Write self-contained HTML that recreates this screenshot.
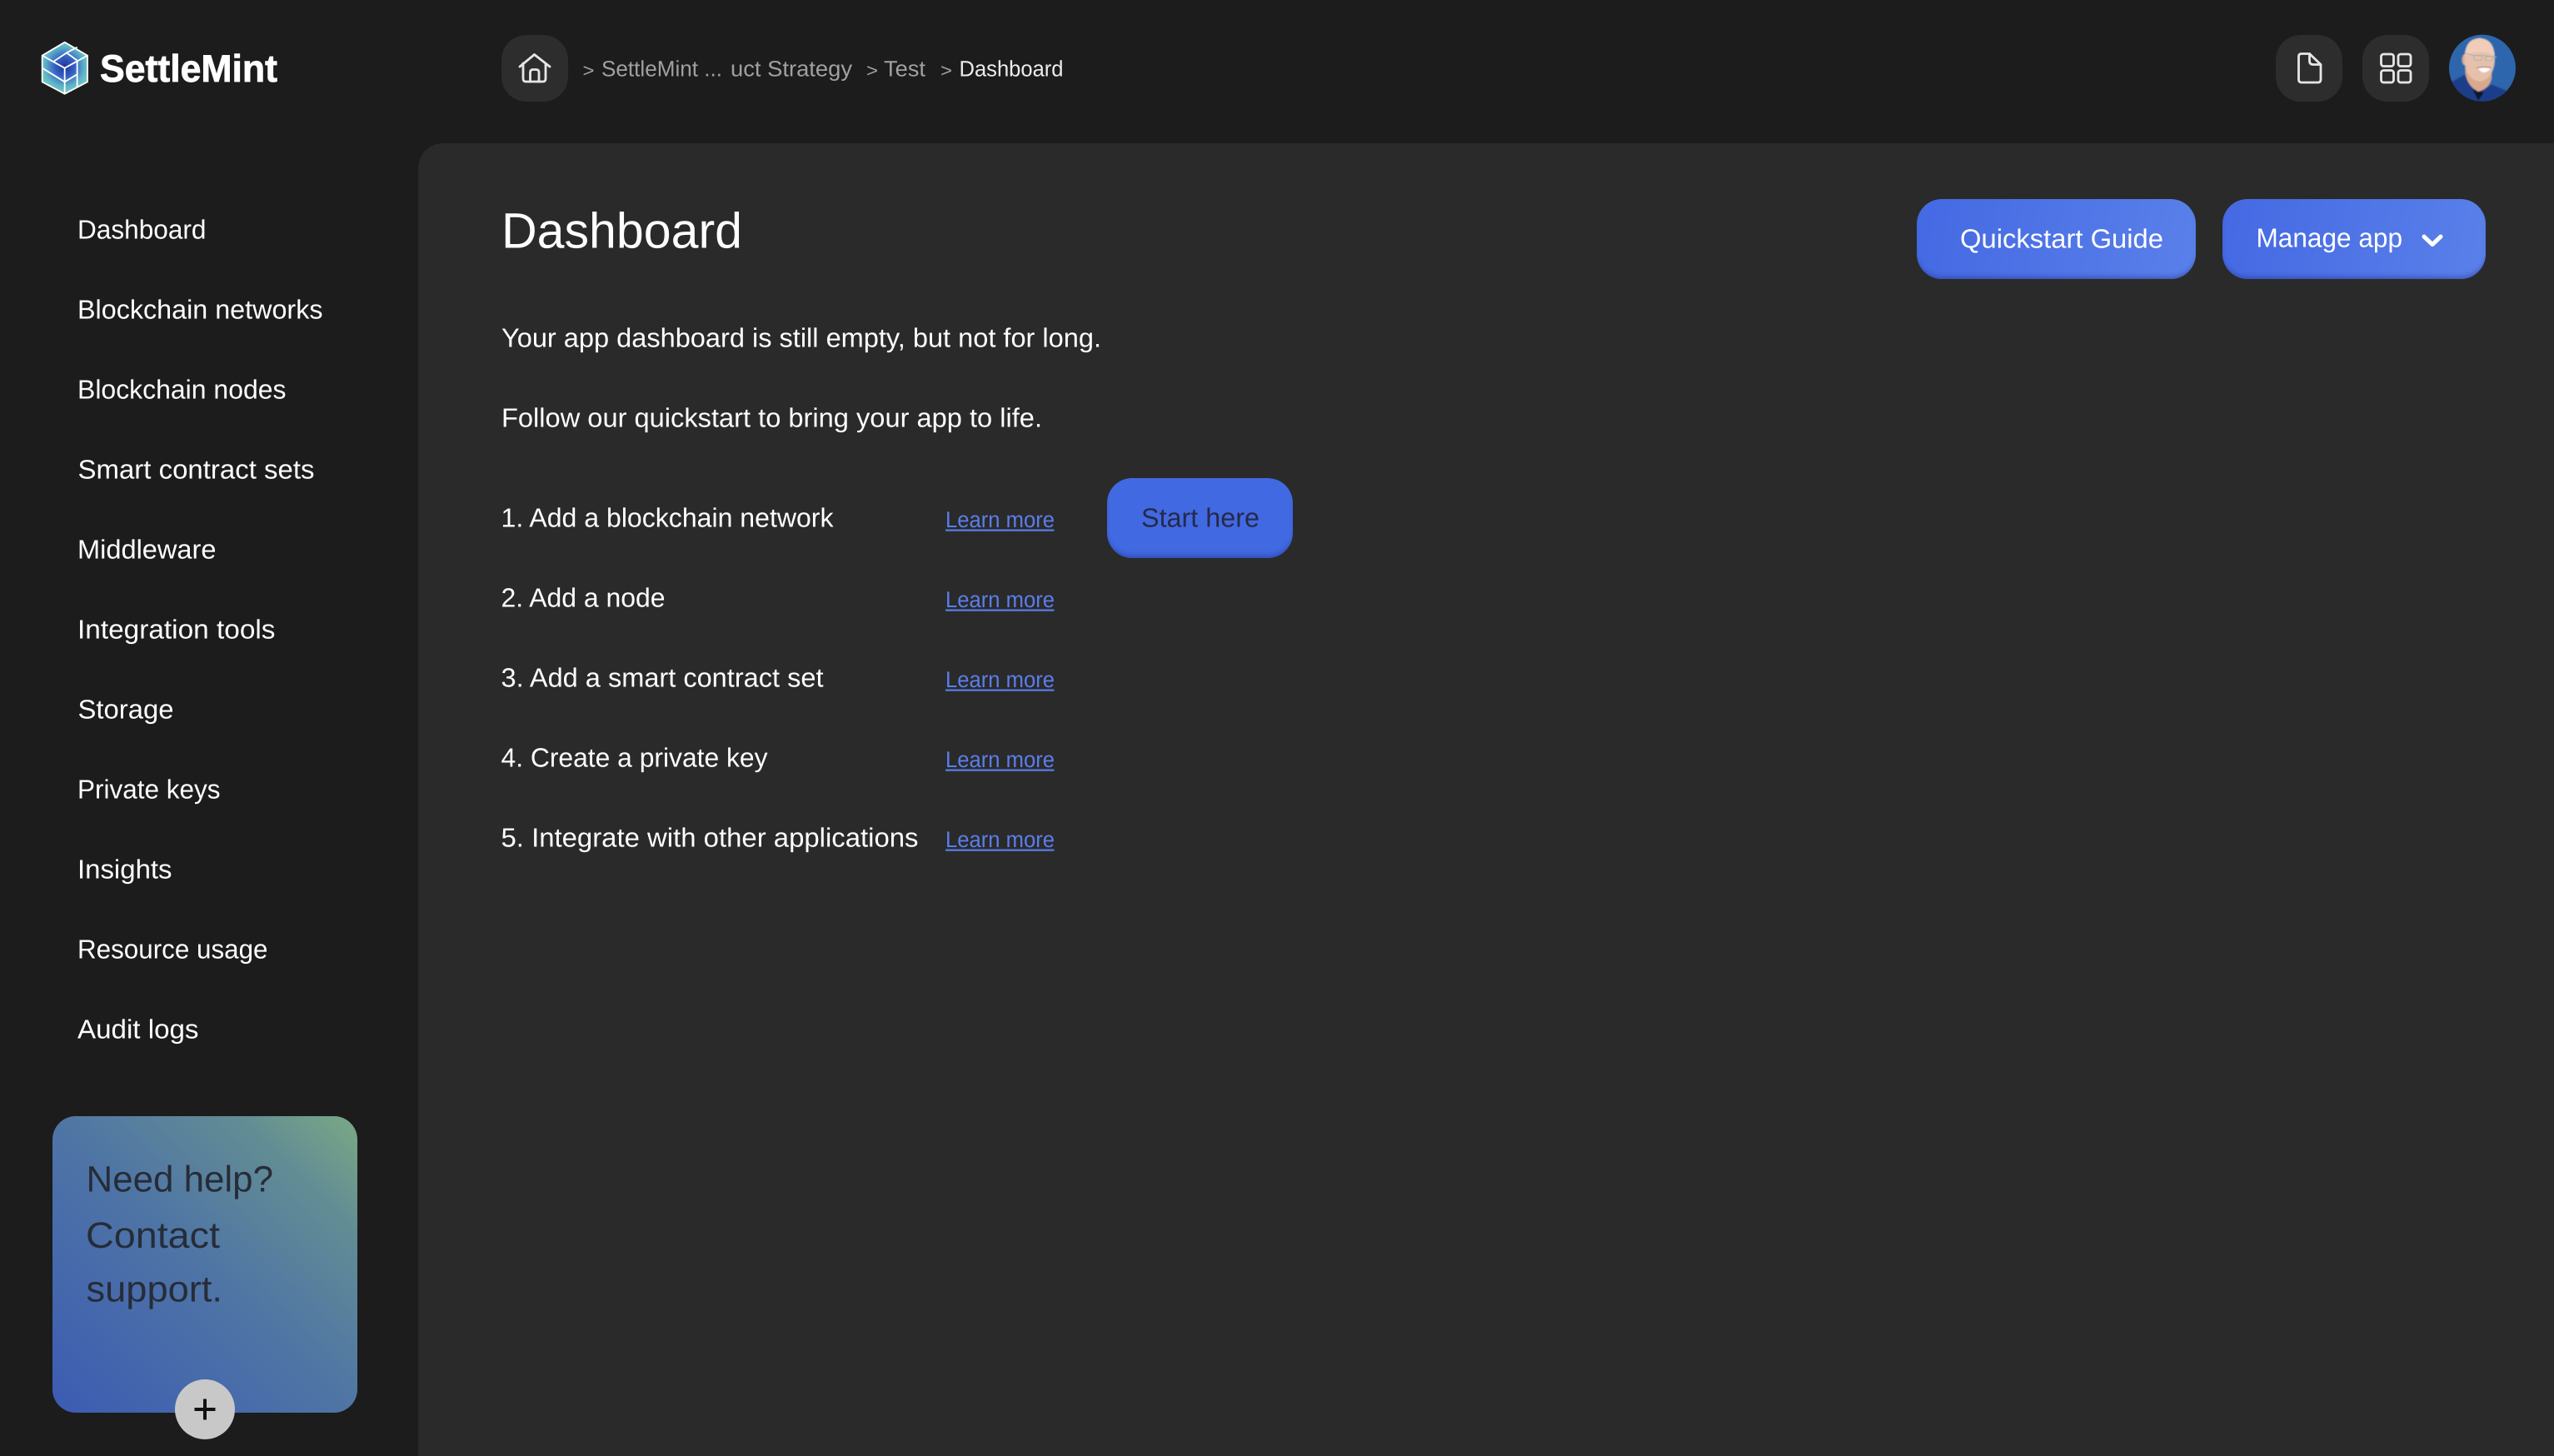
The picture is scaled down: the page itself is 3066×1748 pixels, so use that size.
<!DOCTYPE html>
<html lang="en"><head><meta charset="utf-8"><title>Dashboard</title>
<style>
html,body{margin:0;padding:0;background:#1c1c1c;width:3066px;height:1748px;overflow:hidden}
.a{position:absolute;box-sizing:border-box}
.p{left:502px;top:172px;width:2564px;height:1576px;background:#2a2a2a;border-top-left-radius:30px}
.i{width:80px;height:80px;top:42px;background:#2d2d2d;border-radius:30px}
.b{border-radius:30px;box-shadow:inset 0 -6px 6px -3px rgba(25,40,120,.4)}
svg{position:absolute;left:0;top:0}
text{font-family:"Liberation Sans",sans-serif;text-rendering:geometricPrecision}
.n{font-size:32px;fill:#fff}
.l{font-size:27px;fill:#5b7eea}
.c{font-size:26.5px;fill:#a0a0a0}
.h{font-size:44px;fill:#262c38}
</style></head><body>
<div class="a p"></div>
<div class="a i" style="left:602px"></div>
<div class="a i" style="left:2732px"></div>
<div class="a i" style="left:2836px"></div>
<div class="a b" style="left:2301px;top:239px;width:335px;height:96px;background:linear-gradient(100deg,#4469e3,#5a80ea)"></div>
<div class="a b" style="left:2668px;top:239px;width:316px;height:96px;background:linear-gradient(100deg,#4469e3,#5a80ea)"></div>
<div class="a b" style="left:1329px;top:574px;width:223px;height:96px;background:#4169e1"></div>
<svg width="3066" height="1748" viewBox="0 0 3066 1748" xmlns="http://www.w3.org/2000/svg">
<defs>
<radialGradient id="cube" gradientUnits="userSpaceOnUse" cx="143" cy="150" r="90"><stop offset="0" stop-color="#1f3596"/><stop offset=".4" stop-color="#3560c4"/><stop offset=".8" stop-color="#5fb4c8"/><stop offset="1" stop-color="#72c8c2"/></radialGradient>
<linearGradient id="card" x1="0" y1="1" x2="1" y2="0"><stop offset="0" stop-color="#3c5bb3"/><stop offset=".5" stop-color="#4f75a5"/><stop offset=".8" stop-color="#628c94"/><stop offset="1" stop-color="#7aa985"/></linearGradient>
<clipPath id="av"><circle cx="180" cy="155" r="120"/></clipPath>
<filter id="bl"><feGaussianBlur stdDeviation="2"/></filter>
</defs>

<g transform="translate(30 30) scale(.3333)" stroke="#fff" stroke-width="5.5" fill="none" stroke-linejoin="round">
<path d="M143 62L225 110V205L143 248L62 205V110Z" fill="url(#cube)"/>
<path d="M62 110L143 155V248M143 155L225 110M105 130L150 100L188 128M150 100L188 80M188 128V222M62 155L143 205L188 178"/>
</g>
<text x="120" y="98" font-size="46" font-weight="700" fill="#fff" stroke="#fff" stroke-width=".8" textLength="213" lengthAdjust="spacingAndGlyphs">SettleMint</text>

<!-- home -->
<g fill="none" stroke="#e6e6e6" stroke-width="2.8" stroke-linecap="round" stroke-linejoin="round">
<path d="M624 80L641.5 65.5L660 80"/>
<path d="M628 76V94.5Q628 98 631.5 98H651.5Q655 98 655 94.5V76"/>
<path d="M636.5 98V87Q636.5 83.5 640 83.5H643.5Q647 83.5 647 87V98"/>
<!-- file -->
<path d="M2772.5 64.5H2763Q2759.5 64.5 2759.5 68V95.5Q2759.5 99 2763 99H2782.5Q2786 99 2786 95.5V77.5L2772.5 64.5V73Q2772.5 77.5 2777 77.5H2786"/>
<!-- grid -->
<rect x="2858.5" y="65" width="15" height="14.5" rx="3"/><rect x="2879" y="65" width="15" height="14.5" rx="3"/>
<rect x="2858.5" y="84.5" width="15" height="14.5" rx="3"/><rect x="2879" y="84.5" width="15" height="14.5" rx="3"/>
</g>

<!-- avatar -->
<g transform="translate(2920 30) scale(.3333)" clip-path="url(#av)">
<rect x="50" y="25" width="260" height="260" fill="#2e66ad"/>
<g filter="url(#bl)">
<path d="M60 290V210L118 178L160 240L215 215L275 240V290Z" fill="#1c3c8a"/>
<path d="M145 232L165 272L185 245L165 232Z" fill="#10162e"/>
<path d="M118 170Q125 220 165 240Q208 228 214 190V150H118Z" fill="#d8a88f"/>
<ellipse cx="116" cy="125" rx="10" ry="20" fill="#d8a88f"/>
<ellipse cx="170" cy="125" rx="55" ry="78" fill="#e6c0aa"/>
<path d="M116 110Q120 48 170 48Q220 48 225 110Q170 85 116 110Z" fill="#efcdb9"/>
<path d="M163 156Q188 150 210 156Q198 174 178 170Z" fill="#fff"/>
<path d="M160 155Q188 148 212 155" stroke="#8a5a4a" stroke-width="3" fill="none"/>
</g>
<g fill="none" stroke="#a8b0b8" stroke-width="2.5"><path d="M120 102L150 110H180L215 113L232 116"/><rect x="148" y="110" width="32" height="17" rx="8"/><rect x="190" y="113" width="28" height="16" rx="8"/></g>
</g>

<!-- breadcrumbs -->
<text class="c" x="699.5" y="92" style="font-size:22px" textLength="14" lengthAdjust="spacingAndGlyphs">&gt;</text>
<text class="c" x="722" y="91.5" textLength="145" lengthAdjust="spacingAndGlyphs">SettleMint ...</text>
<text class="c" x="877" y="91.5" textLength="146" lengthAdjust="spacingAndGlyphs">uct Strategy</text>
<text class="c" x="1040" y="92" style="font-size:22px" textLength="14" lengthAdjust="spacingAndGlyphs">&gt;</text>
<text class="c" x="1061" y="91.5" textLength="50" lengthAdjust="spacingAndGlyphs">Test</text>
<text class="c" x="1129" y="92" style="font-size:22px" textLength="14" lengthAdjust="spacingAndGlyphs">&gt;</text>
<text class="c" x="1151.5" y="91.5" style="fill:#ececec" textLength="125" lengthAdjust="spacingAndGlyphs">Dashboard</text>

<!-- nav -->
<text class="n" x="93" y="286.7" textLength="154.5" lengthAdjust="spacingAndGlyphs">Dashboard</text>
<text class="n" x="93" y="382.7" textLength="294.5" lengthAdjust="spacingAndGlyphs">Blockchain networks</text>
<text class="n" x="93" y="478.7" textLength="250.5" lengthAdjust="spacingAndGlyphs">Blockchain nodes</text>
<text class="n" x="93.5" y="574.7" textLength="284" lengthAdjust="spacingAndGlyphs">Smart contract sets</text>
<text class="n" x="93" y="670.7" textLength="166.5" lengthAdjust="spacingAndGlyphs">Middleware</text>
<text class="n" x="93" y="766.7" textLength="237.5" lengthAdjust="spacingAndGlyphs">Integration tools</text>
<text class="n" x="93.5" y="862.7" textLength="115" lengthAdjust="spacingAndGlyphs">Storage</text>
<text class="n" x="93" y="958.7" textLength="171.5" lengthAdjust="spacingAndGlyphs">Private keys</text>
<text class="n" x="93" y="1054.7" textLength="113.5" lengthAdjust="spacingAndGlyphs">Insights</text>
<text class="n" x="93" y="1150.7" textLength="228.5" lengthAdjust="spacingAndGlyphs">Resource usage</text>
<text class="n" x="93" y="1246.7" textLength="145.5" lengthAdjust="spacingAndGlyphs">Audit logs</text>

<!-- help card -->
<rect x="63" y="1340" width="366" height="356" rx="28" fill="url(#card)"/>
<text class="h" x="103.5" y="1430.7" textLength="224.5" lengthAdjust="spacingAndGlyphs">Need help?</text>
<text class="h" x="103" y="1498" textLength="161" lengthAdjust="spacingAndGlyphs">Contact</text>
<text class="h" x="103.5" y="1562.7" textLength="163.5" lengthAdjust="spacingAndGlyphs">support.</text>
<circle cx="246" cy="1692" r="36" fill="#c8c8c8"/>
<path d="M233.5 1692H258.5M246 1679.5V1704.5" stroke="#111" stroke-width="4" fill="none"/>

<!-- main -->
<text x="602" y="297.7" font-size="60" fill="#fff" textLength="289" lengthAdjust="spacingAndGlyphs">Dashboard</text>
<text class="n" x="602" y="416.7" textLength="720" lengthAdjust="spacingAndGlyphs">Your app dashboard is still empty, but not for long.</text>
<text class="n" x="602" y="512.7" textLength="649" lengthAdjust="spacingAndGlyphs">Follow our quickstart to bring your app to life.</text>
<text class="n" x="601.5" y="632.3" textLength="399" lengthAdjust="spacingAndGlyphs">1. Add a blockchain network</text>
<text class="n" x="601.5" y="728.3" textLength="197" lengthAdjust="spacingAndGlyphs">2. Add a node</text>
<text class="n" x="601.5" y="824.3" textLength="387" lengthAdjust="spacingAndGlyphs">3. Add a smart contract set</text>
<text class="n" x="601.5" y="920.3" textLength="320" lengthAdjust="spacingAndGlyphs">4. Create a private key</text>
<text class="n" x="601.5" y="1016.7" textLength="501" lengthAdjust="spacingAndGlyphs">5. Integrate with other applications</text>

<g>
<text class="l" x="1135" y="633" textLength="131" lengthAdjust="spacingAndGlyphs">Learn more</text><rect x="1135" y="635.5" width="130.5" height="2.2" fill="#5b7eea"/>
<text class="l" x="1135" y="729" textLength="131" lengthAdjust="spacingAndGlyphs">Learn more</text><rect x="1135" y="731.5" width="130.5" height="2.2" fill="#5b7eea"/>
<text class="l" x="1135" y="825" textLength="131" lengthAdjust="spacingAndGlyphs">Learn more</text><rect x="1135" y="827.5" width="130.5" height="2.2" fill="#5b7eea"/>
<text class="l" x="1135" y="921" textLength="131" lengthAdjust="spacingAndGlyphs">Learn more</text><rect x="1135" y="923.5" width="130.5" height="2.2" fill="#5b7eea"/>
<text class="l" x="1135" y="1017" textLength="131" lengthAdjust="spacingAndGlyphs">Learn more</text><rect x="1135" y="1019.5" width="130.5" height="2.2" fill="#5b7eea"/>
</g>

<text class="n" x="1370" y="632.3" style="fill:#26294a" textLength="142" lengthAdjust="spacingAndGlyphs">Start here</text>
<text class="n" x="2353" y="297.7" textLength="244" lengthAdjust="spacingAndGlyphs">Quickstart Guide</text>
<text class="n" x="2708.5" y="296.7" textLength="175.5" lengthAdjust="spacingAndGlyphs">Manage app</text>
<path d="M2910 284L2920 293.5L2930 284" stroke="#fff" stroke-width="5" fill="none" stroke-linecap="round" stroke-linejoin="round"/>
</svg>
</body></html>
